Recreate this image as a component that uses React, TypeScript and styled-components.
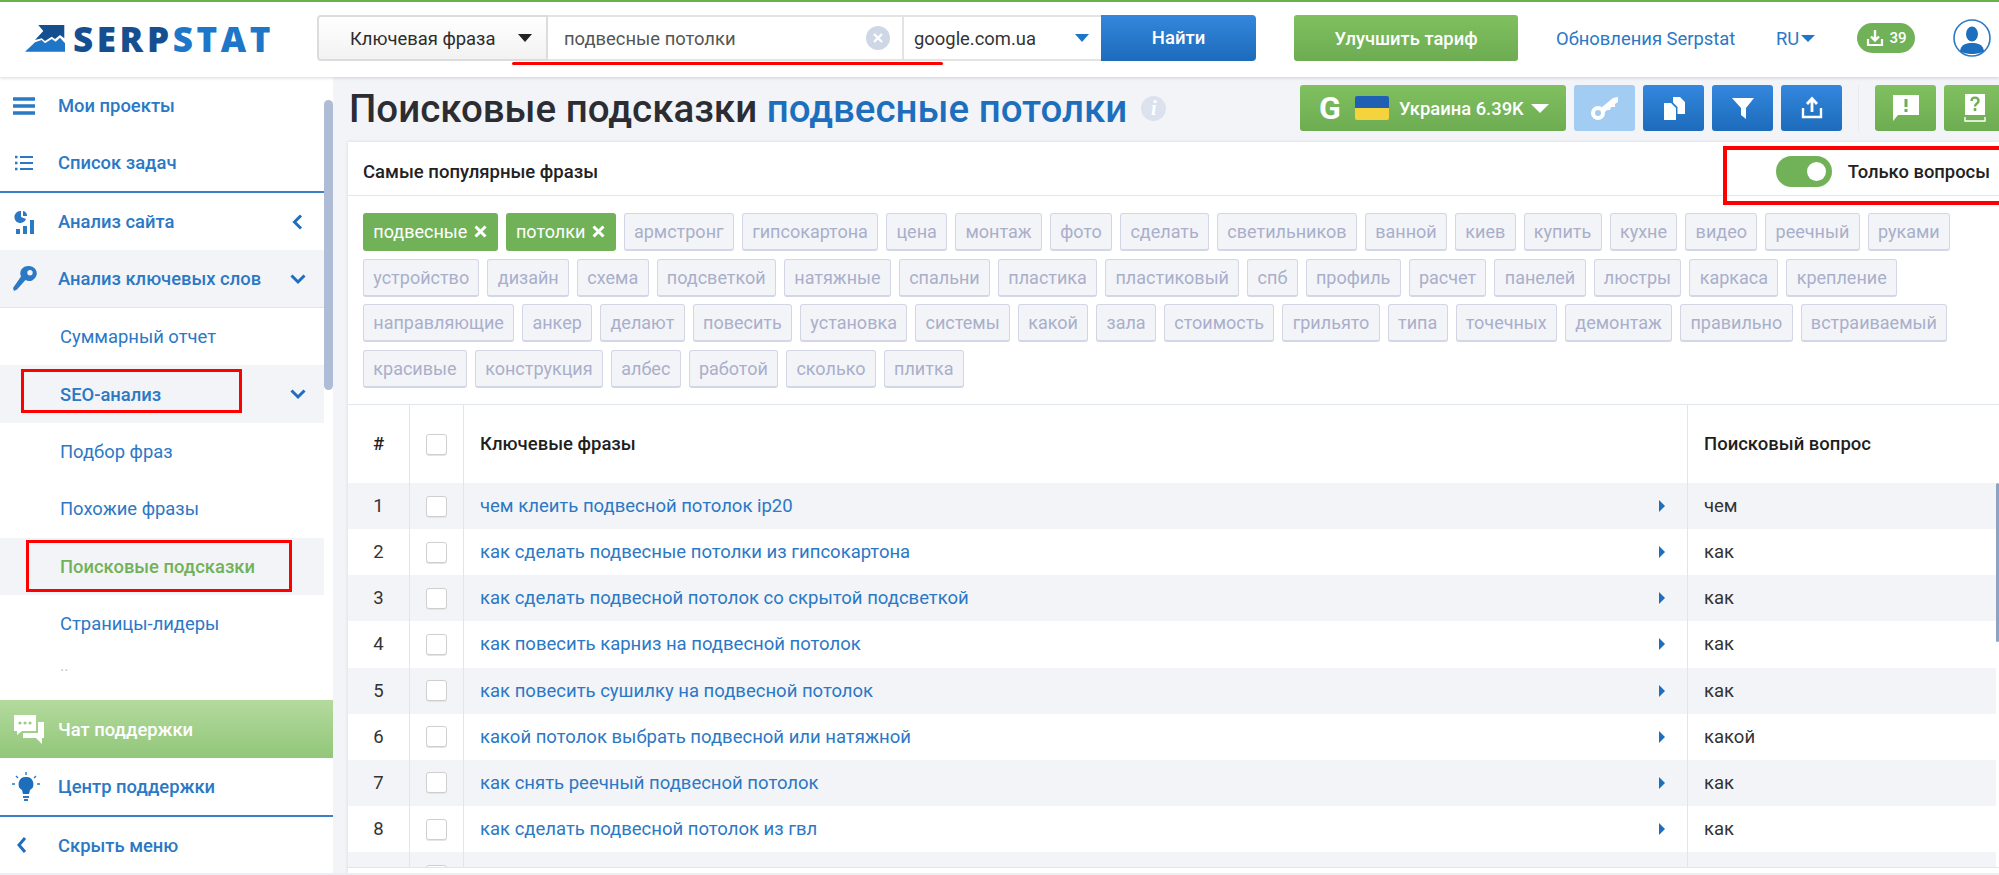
import React from 'react';
import styled, { createGlobalStyle } from 'styled-components';

const BLUE = '#2b78c5';
const GREEN = '#71b259';
const PALE = '#f3f4f8';
const LINE = '#e1e5f0';

const GlobalStyle = createGlobalStyle`
  html, body { margin: 0; padding: 0; background: #fff; }
  body { font-family: Roboto, "Liberation Sans", sans-serif; }
  * { box-sizing: border-box; }
`;

const Page = styled.div`
  position: relative;
  width: 1999px;
  height: 875px;
  overflow: hidden;
  display: flex;
  flex-direction: column;
  border-top: 2px solid #6ab04c;
  border-bottom: 2px solid #eceef3;
  background: #fff;
`;

// верхняя панель
const Header = styled.header`
  height: 75px;
  flex: none;
  display: flex;
  align-items: flex-start;
  padding: 13px 0 0 24px;
  box-shadow: 0 1px 3px rgba(120, 130, 150, .3);
  position: relative;
  z-index: 2;
  background: #fff;
`;

const Logo = styled.div`
  width: 293px;
  height: 46px;
  display: flex;
  align-items: center;
  gap: 7px;
`;

const LogoWord = styled.span`
  font-family: "Open Sans", Roboto, sans-serif;
  font-weight: 800;
  font-size: 35px;
  line-height: 1;
  letter-spacing: 3.6px;
  color: #164f8f;
  & > b { font-weight: 800; color: #1d76c8; }
`;

const SearchBar = styled.div`
  display: flex;
  height: 46px;
  width: 939px;
`;

const KindSelect = styled.div`
  width: 231px;
  display: flex;
  align-items: center;
  justify-content: space-between;
  padding: 0 14px 0 31px;
  font-size: 18.4px;
  color: #2c2c2c;
  background: linear-gradient(#ffffff, #f2f2f2);
  border: 2px solid #dcdcdc;
  border-radius: 4px 0 0 4px;
`;

const QueryBox = styled.div`
  width: 354px;
  display: flex;
  align-items: center;
  justify-content: space-between;
  padding: 0 12px 0 16px;
  font-size: 18.4px;
  color: #555;
  border-top: 2px solid #e3e3e3;
  border-bottom: 2px solid #e3e3e3;
`;

const ClearIcon = styled.span`
  width: 24px;
  height: 24px;
  border-radius: 50%;
  background: #cdd7e6;
  display: flex;
  align-items: center;
  justify-content: center;
`;

const DomainSelect = styled.div`
  width: 199px;
  display: flex;
  align-items: center;
  justify-content: space-between;
  padding: 0 12px 0 10px;
  font-size: 18.4px;
  color: #333;
  border: 2px solid #e3e3e3;
  border-right: 0;
`;

const Caret = styled.span<{ $color: string; $w?: number; $h?: number }>`
  width: 0;
  height: 0;
  flex: none;
  border-left: ${p => p.$w ?? 7}px solid transparent;
  border-right: ${p => p.$w ?? 7}px solid transparent;
  border-top: ${p => p.$h ?? 8}px solid ${p => p.$color};
`;

const FindButton = styled.div`
  width: 155px;
  display: flex;
  align-items: center;
  justify-content: center;
  color: #fff;
  font-size: 18.5px;
  font-weight: 500;
  background: linear-gradient(#3387dd, #1d6bbb);
  border-radius: 0 4px 4px 0;
`;

const UpgradeButton = styled.div`
  margin-left: 38px;
  width: 224px;
  height: 46px;
  display: flex;
  align-items: center;
  justify-content: center;
  color: #fff;
  font-size: 18.4px;
  font-weight: 500;
  background: linear-gradient(#80c05f, #6dac52);
  border-radius: 3px;
`;

const HeaderLinks = styled.div`
  height: 46px;
  display: flex;
  align-items: center;
  color: ${BLUE};
  font-size: 18.4px;
`;

const UpdatesLink = styled.span`
  margin-left: 38px;
  width: 220px;
`;

const Lang = styled.span`
  display: flex;
  align-items: center;
  gap: 2px;
  width: 81px;
`;

const Badge = styled.span`
  width: 58px;
  height: 30px;
  border-radius: 15px;
  background: ${GREEN};
  color: #fff;
  font-size: 15px;
  font-weight: 500;
  display: flex;
  align-items: center;
  justify-content: center;
  gap: 4px;
`;

const Avatar = styled.span`
  margin-left: 38px;
  display: flex;
`;

const Body = styled.div`
  flex: 1;
  min-height: 0;
  display: flex;
`;

// боковое меню
const Sidebar = styled.aside`
  width: 333px;
  flex: none;
  display: flex;
  flex-direction: column;
  background: #fff;
`;

const SideScroll = styled.nav`
  position: relative;
  height: 623px;
  overflow: hidden;
  flex: none;
  padding-right: 9px;
`;

const SideThumb = styled.div`
  position: absolute;
  top: 23px;
  right: 0;
  width: 9px;
  height: 290px;
  border-radius: 5px;
  background: #afbcd5;
`;

const SideItem = styled.div<{ $sel?: boolean; $tall?: number }>`
  height: ${p => p.$tall ?? 57}px;
  display: flex;
  align-items: center;
  padding-right: 18px;
  font-size: 18.4px;
  font-weight: 500;
  color: ${BLUE};
  background: ${p => (p.$sel ? PALE : 'transparent')};
`;

const SideIcon = styled.span`
  width: 58px;
  flex: none;
  display: flex;
  justify-content: flex-start;
  padding-left: 12px;
`;

const SideLabel = styled.span`
  flex: 1;
`;

const SubItem = styled.div<{ $sel?: boolean; $active?: boolean; $strong?: boolean }>`
  height: 57.4px;
  display: flex;
  align-items: center;
  padding: 0 18px 0 60px;
  font-size: 18.4px;
  font-weight: ${p => (p.$strong || p.$active ? 500 : 400)};
  color: ${p => (p.$active ? GREEN : BLUE)};
  background: ${p => (p.$sel ? PALE : 'transparent')};
`;

const MoreDots = styled.div`
  height: 49px;
  padding: 4px 0 0 60px;
  font-size: 16px;
  color: #b9c6dc;
`;

const Divider = styled.div`
  height: 2px;
  background: #3d7fc4;
`;

const ThinDivider = styled.div`
  height: 1px;
  background: ${LINE};
`;

const ChatItem = styled.div`
  height: 58px;
  display: flex;
  align-items: center;
  font-size: 18.4px;
  font-weight: 500;
  color: #fff;
  background: linear-gradient(#b4da9d, #92c67a);
`;

// контент
const Main = styled.main`
  flex: 1;
  min-width: 0;
  display: flex;
  flex-direction: column;
  padding: 8px 0 0 15px;
  background: ${PALE};
  overflow: hidden;
`;

const TitleRow = styled.div`
  height: 46px;
  flex: none;
  display: flex;
  align-items: center;
  margin-bottom: 11px;
`;

const Title = styled.h1`
  margin: 0;
  padding-left: 1px;
  font-size: 38.5px;
  font-weight: 500;
  color: #2b2d33;
  white-space: nowrap;
  & > em { font-style: normal; color: #1d6fbd; }
`;

const InfoDot = styled.span`
  margin-left: 14px;
  width: 25px;
  height: 25px;
  border-radius: 50%;
  background: #dbe2ed;
  color: #fff;
  font-family: "Liberation Serif", serif;
  font-style: italic;
  font-weight: 700;
  font-size: 20px;
  display: flex;
  align-items: center;
  justify-content: center;
`;

const Tools = styled.div`
  margin-left: auto;
  margin-right: -6px;
  display: flex;
  gap: 8px;
  align-items: center;
`;

const ToolButton = styled.div<{ $tone: 'blue' | 'green' | 'light' }>`
  width: 61px;
  height: 46px;
  flex: none;
  display: flex;
  align-items: center;
  justify-content: center;
  border-radius: 3px;
  background: ${p =>
    p.$tone === 'blue'
      ? 'linear-gradient(#3387dd, #1d6bbb)'
      : p.$tone === 'green'
      ? 'linear-gradient(#80c05f, #6dac52)'
      : '#a3ccf3'};
`;

const RegionButton = styled.div`
  width: 266px;
  height: 46px;
  flex: none;
  display: flex;
  align-items: center;
  padding-left: 19px;
  color: #fff;
  font-size: 18.4px;
  font-weight: 500;
  background: linear-gradient(#80c05f, #6dac52);
  border-radius: 3px;
`;

const GoogleG = styled.span`
  font-size: 32px;
  font-weight: 700;
  line-height: 1;
  width: 36px;
`;

const Flag = styled.span`
  width: 34px;
  height: 24px;
  margin-right: 10px;
  border-radius: 2px;
  background: linear-gradient(#1f5fb4 50%, #f5d33c 50%);
`;

const RegionText = styled.span`
  margin-right: 7px;
`;

const ToolSep = styled.span`
  width: 1px;
  height: 46px;
  margin: 0 8px;
  background: #e8eaf0;
`;

const Card = styled.section`
  flex: 1;
  min-height: 0;
  display: flex;
  flex-direction: column;
  background: #fff;
  box-shadow: 0 0 3px rgba(120, 130, 160, .25);
`;

const CardHead = styled.div`
  height: 54px;
  flex: none;
  display: flex;
  align-items: center;
  justify-content: space-between;
  padding: 6px 9px 0 15px;
  border-bottom: 1px solid ${LINE};
`;

const CardTitle = styled.span`
  font-size: 18.5px;
  font-weight: 500;
  color: #222;
`;

const OnlyQuestions = styled.div`
  display: flex;
  align-items: center;
  gap: 16px;
  font-size: 18.4px;
  font-weight: 500;
  color: #222;
`;

const Toggle = styled.span`
  width: 56px;
  height: 31px;
  border-radius: 16px;
  background: ${GREEN};
  display: flex;
  align-items: center;
  justify-content: flex-end;
  padding-right: 6px;
  &::after {
    content: '';
    width: 19px;
    height: 19px;
    border-radius: 50%;
    background: #fff;
  }
`;

const Tags = styled.div`
  flex: none;
  height: 209px;
  display: flex;
  flex-wrap: wrap;
  align-content: flex-start;
  gap: 7.6px 8px;
  padding: 17px 40px 0 15px;
  border-bottom: 1px solid ${LINE};
`;

const Tag = styled.span<{ $on?: boolean }>`
  height: 38px;
  display: flex;
  align-items: center;
  gap: 7px;
  padding: 0 9.3px;
  font-size: 18px;
  border-radius: 3px;
  color: ${p => (p.$on ? '#fff' : '#a9afca')};
  background: ${p => (p.$on ? GREEN : PALE)};
  border: 1px solid ${p => (p.$on ? GREEN : '#d3d6e5')};
  border-bottom-width: 2px;
`;

const Table = styled.div`
  flex: 1;
  min-height: 0;
  position: relative;
  overflow: hidden;
  padding-right: 3px;
  border-bottom: 1px solid ${LINE};
  margin-bottom: 5px;
`;

const TableThumb = styled.div`
  position: absolute;
  top: 78px;
  right: 0;
  width: 3px;
  height: 159px;
  background: #8ea2c4;
  border-radius: 2px;
`;

const Row = styled.div<{ $head?: boolean; $even?: boolean }>`
  height: ${p => (p.$head ? 78 : 46.15)}px;
  display: grid;
  grid-template-columns: 62px 54px 1fr 308px;
  background: ${p => (p.$even ? PALE : '#fff')};
  font-size: 18.5px;
  font-weight: ${p => (p.$head ? 500 : 400)};
  color: ${p => (p.$head ? '#1f1f1f' : '#333')};
`;

const NumCell = styled.div`
  display: flex;
  align-items: center;
  justify-content: center;
  border-right: 1px solid ${LINE};
`;

const CheckCell = styled.div`
  display: flex;
  align-items: center;
  justify-content: center;
  border-right: 1px solid ${LINE};
`;

const Checkbox = styled.span`
  width: 21px;
  height: 21px;
  border: 1px solid #cfcfcf;
  border-radius: 3px;
  background: #fff;
  box-shadow: 0 1px 0 #e4e4e4;
`;

const PhraseCell = styled.div`
  display: flex;
  align-items: center;
  justify-content: space-between;
  padding: 0 22px 0 16px;
  border-right: 1px solid ${LINE};
`;

const PhraseLink = styled.span`
  color: ${BLUE};
`;

const RowArrow = styled.span`
  width: 0;
  height: 0;
  border-top: 6px solid transparent;
  border-bottom: 6px solid transparent;
  border-left: 6px solid #1d6fbd;
`;

const QuestionCell = styled.div`
  display: flex;
  align-items: center;
  padding-left: 16px;
`;

// красные пометки поверх скриншота
const RedBox = styled.div<{ $x: number; $y: number; $w: number; $h: number; $bold?: boolean }>`
  position: absolute;
  left: ${p => p.$x}px;
  top: ${p => p.$y}px;
  width: ${p => p.$w}px;
  height: ${p => p.$h}px;
  border: ${p => (p.$bold ? 4 : 3)}px solid #f00;
  z-index: 5;
`;

const RedLine = styled.div`
  position: absolute;
  left: 512px;
  top: 60px;
  width: 431px;
  height: 3px;
  border-radius: 2px;
  background: #f00;
  z-index: 5;
`;

const TAGS: string[][] = [
  ['армстронг', 'гипсокартона', 'цена', 'монтаж', 'фото', 'сделать', 'светильников', 'ванной', 'киев', 'купить', 'кухне', 'видео', 'реечный', 'руками'],
  ['устройство', 'дизайн', 'схема', 'подсветкой', 'натяжные', 'спальни', 'пластика', 'пластиковый', 'спб', 'профиль', 'расчет', 'панелей', 'люстры', 'каркаса', 'крепление'],
  ['направляющие', 'анкер', 'делают', 'повесить', 'установка', 'системы', 'какой', 'зала', 'стоимость', 'грильято', 'типа', 'точечных', 'демонтаж', 'правильно', 'встраиваемый'],
  ['красивые', 'конструкция', 'албес', 'работой', 'сколько', 'плитка'],
];

const ROWS: [string, string][] = [
  ['чем клеить подвесной потолок ip20', 'чем'],
  ['как сделать подвесные потолки из гипсокартона', 'как'],
  ['как сделать подвесной потолок со скрытой подсветкой', 'как'],
  ['как повесить карниз на подвесной потолок', 'как'],
  ['как повесить сушилку на подвесной потолок', 'как'],
  ['какой потолок выбрать подвесной или натяжной', 'какой'],
  ['как снять реечный подвесной потолок', 'как'],
  ['как сделать подвесной потолок из гвл', 'как'],
];

const LogoMark = () => (
  <svg width="42" height="30" viewBox="0 0 42 30">
    <path d="M14.3 2H40.3V15.3L36 12L31 16L27.7 13.7L21 18L17.7 15.3L11 17L19.3 8Z" fill="#164f8f" />
    <path d="M1 28.7L11 19.3L17.7 17L21 20.3L27.7 16L31.7 18.7L36 14.7L41 20.3V28.7Z" fill="#1d76c8" />
  </svg>
);

const Chevron = ({ dir }: { dir: 'left' | 'down' }) => (
  <svg width="16" height="16" viewBox="0 0 16 16">
    <path
      d={dir === 'left' ? 'M11 1.5L4.5 8L11 14.5' : 'M1.5 4.5L8 11L14.5 4.5'}
      fill="none"
      stroke="#1d6fbd"
      strokeWidth="3"
    />
  </svg>
);

const App = () => (
  <Page>
    <GlobalStyle />
    <Header>
      <Logo>
        <LogoMark />
        <LogoWord>SERP<b>STAT</b></LogoWord>
      </Logo>
      <SearchBar>
        <KindSelect>Ключевая фраза <Caret $color="#222" /></KindSelect>
        <QueryBox>
          подвесные потолки
          <ClearIcon>
            <svg width="12" height="12" viewBox="0 0 12 12">
              <path d="M2 2L10 10M10 2L2 10" stroke="#fff" strokeWidth="2.4" />
            </svg>
          </ClearIcon>
        </QueryBox>
        <DomainSelect>google.com.ua <Caret $color="#1d76c8" /></DomainSelect>
        <FindButton>Найти</FindButton>
      </SearchBar>
      <UpgradeButton>Улучшить тариф</UpgradeButton>
      <HeaderLinks>
        <UpdatesLink>Обновления Serpstat</UpdatesLink>
        <Lang>RU <Caret $color="#1d76c8" $h={7} /></Lang>
        <Badge>
          <svg width="20" height="20" viewBox="0 0 20 20">
            <path d="M10 2V12M6 8.5L10 12.5L14 8.5" fill="none" stroke="#fff" strokeWidth="2.4" />
            <path d="M3 11V17H17V11" fill="none" stroke="#fff" strokeWidth="2.2" />
          </svg>
          39
        </Badge>
        <Avatar>
          <svg width="38" height="38" viewBox="0 0 38 38">
            <circle cx="19" cy="19" r="18" fill="#fff" stroke="#2b78c5" strokeWidth="1.6" />
            <ellipse cx="19" cy="15" rx="6" ry="7.5" fill="#1d6fbd" />
            <path d="M7 32C8 26 12 24 19 24C26 24 30 26 31 32C27 36 11 36 7 32Z" fill="#1d6fbd" />
          </svg>
        </Avatar>
      </HeaderLinks>
    </Header>
    <Body>
      <Sidebar>
        <SideScroll>
          <SideThumb />
          <SideItem>
            <SideIcon>
              <svg width="24" height="20" viewBox="0 0 24 20">
                <path d="M1 3H23M1 10H23M1 17H23" stroke="#2b78c5" strokeWidth="3.4" />
              </svg>
            </SideIcon>
            <SideLabel>Мои проекты</SideLabel>
          </SideItem>
          <SideItem>
            <SideIcon>
              <svg width="24" height="18" viewBox="0 0 24 18">
                <path d="M8 3H21M8 9H21M8 15H21" stroke="#2b78c5" strokeWidth="2" />
                <path d="M3 3H5.5M3 9H5.5M3 15H5.5" stroke="#2b78c5" strokeWidth="2.4" />
              </svg>
            </SideIcon>
            <SideLabel>Список задач</SideLabel>
          </SideItem>
          <Divider />
          <SideItem>
            <SideIcon>
              <svg width="24" height="24" viewBox="0 0 24 24">
                <path d="M9 1A6 6 0 1 0 14 9L9 7Z" fill="#2b78c5" />
                <path d="M11 1A5 5 0 0 1 15 6L11 6Z" fill="#2b78c5" />
                <path d="M4 19H8V24H4ZM11 16H15V24H11ZM18 10H22V24H18Z" fill="#2b78c5" />
              </svg>
            </SideIcon>
            <SideLabel>Анализ сайта</SideLabel>
            <Chevron dir="left" />
          </SideItem>
          <SideItem $sel>
            <SideIcon>
              <svg width="26" height="27" viewBox="0 0 26 27">
                <path fillRule="evenodd" d="M17 1A7.5 7.5 0 1 1 13.5 15L5 24.5L2 26L1 23L9 11.5A7.5 7.5 0 0 1 17 1ZM18 5A2.7 2.7 0 1 0 18 10.4A2.7 2.7 0 1 0 18 5Z" fill="#2b78c5" />
              </svg>
            </SideIcon>
            <SideLabel>Анализ ключевых слов</SideLabel>
            <Chevron dir="down" />
          </SideItem>
          <ThinDivider />
          <SubItem>Суммарный отчет</SubItem>
          <SubItem $sel $strong>
            <SideLabel>SEO-анализ</SideLabel>
            <Chevron dir="down" />
          </SubItem>
          <SubItem>Подбор фраз</SubItem>
          <SubItem>Похожие фразы</SubItem>
          <SubItem $sel $active>Поисковые подсказки</SubItem>
          <SubItem>Страницы-лидеры</SubItem>
          <MoreDots>..</MoreDots>
        </SideScroll>
        <ChatItem>
          <SideIcon>
            <svg width="34" height="32" viewBox="0 0 34 32">
              <path d="M2 2H24V18H10L5 22V18H2Z" fill="#fff" />
              <path d="M26 9H32V25H30V31L24 25H11V20H26Z" fill="#fff" />
              <circle cx="8" cy="10" r="1.6" fill="#9ccb84" />
              <circle cx="13" cy="10" r="1.6" fill="#9ccb84" />
              <circle cx="18" cy="10" r="1.6" fill="#9ccb84" />
            </svg>
          </SideIcon>
          Чат поддержки
        </ChatItem>
        <SideItem>
          <SideIcon>
            <svg width="28" height="30" viewBox="0 0 28 30">
              <path d="M14 5A7 7 0 0 1 18 18L17 22H11L10 18A7 7 0 0 1 14 5Z" fill="#1d6fbd" />
              <path d="M11 24H17V26H11ZM12 27H16V29H12Z" fill="#2b78c5" />
              <path d="M14 0V3M4 4L6 6M24 4L22 6M0 12H3M25 12H28" stroke="#2b78c5" strokeWidth="1.4" />
            </svg>
          </SideIcon>
          Центр поддержки
        </SideItem>
        <Divider />
        <SideItem $tall={56}>
          <SideIcon>
            <svg width="22" height="18" viewBox="0 0 22 18">
              <path d="M13 2L7 9L13 16" fill="none" stroke="#1d6fbd" strokeWidth="3" />
            </svg>
          </SideIcon>
          Скрыть меню
        </SideItem>
      </Sidebar>
      <Main>
        <TitleRow>
          <Title>Поисковые подсказки <em>подвесные потолки</em></Title>
          <InfoDot>i</InfoDot>
          <Tools>
            <RegionButton>
              <GoogleG>G</GoogleG>
              <Flag />
              <RegionText>Украина 6.39K</RegionText>
              <Caret $color="#fff" $w={9} $h={9} />
            </RegionButton>
            <ToolButton $tone="light">
              <svg width="28" height="26" viewBox="0 0 28 26">
                <path fillRule="evenodd" d="M7 11A7 7 0 1 1 7 25A7 7 0 1 1 7 11ZM7 15A3 3 0 1 0 7 21A3 3 0 1 0 7 15Z" fill="#fff" />
                <path d="M10.5 12.5L22 3L27 2L27 7L24 9L24 12L20 12L19 15L16 15L13.5 17.5Z" fill="#fff" />
              </svg>
            </ToolButton>
            <ToolButton $tone="blue">
              <svg width="24" height="24" viewBox="0 0 24 24">
                <path d="M2 7H9L14 12V24H2Z" fill="#fff" />
                <path d="M11 1H18L23 6V18H15.5V11L11 6.5Z" fill="#fff" />
              </svg>
            </ToolButton>
            <ToolButton $tone="blue">
              <svg width="24" height="24" viewBox="0 0 24 24">
                <path d="M1 2H23L15 12V23L10 19V12Z" fill="#fff" />
              </svg>
            </ToolButton>
            <ToolButton $tone="blue">
              <svg width="22" height="24" viewBox="0 0 22 24">
                <path d="M11 16V3M6 8L11 2.5L16 8" fill="none" stroke="#fff" strokeWidth="2.8" />
                <path d="M2 12V21H20V12" fill="none" stroke="#fff" strokeWidth="2.4" />
              </svg>
            </ToolButton>
            <ToolSep />
            <ToolButton $tone="green">
              <svg width="30" height="28" viewBox="0 0 30 28">
                <path d="M2 1H28V21H7L2 27Z" fill="#fff" />
                <path d="M15 5V13M15 15V18" stroke="#6fae52" strokeWidth="3" />
              </svg>
            </ToolButton>
            <ToolButton $tone="green">
              <svg width="24" height="30" viewBox="0 0 24 30">
                <path d="M2 1H22V22H2Z" fill="#fff" />
                <path d="M2 24V28H22V24" fill="none" stroke="#fff" strokeWidth="1.4" />
                <path d="M8.5 8C8.5 3.5 15.5 3.5 15.5 8C15.5 10.5 12 10.5 12 13.5" fill="none" stroke="#6fae52" strokeWidth="2.4" />
                <path d="M12 15V18" stroke="#6fae52" strokeWidth="2.6" />
              </svg>
            </ToolButton>
          </Tools>
        </TitleRow>
        <Card>
          <CardHead>
            <CardTitle>Самые популярные фразы</CardTitle>
            <OnlyQuestions>
              <Toggle />
              Только вопросы
            </OnlyQuestions>
          </CardHead>
          <Tags>
            {['подвесные', 'потолки'].map(t => (
              <Tag key={t} $on>
                {t}
                <svg width="13" height="13" viewBox="0 0 13 13">
                  <path d="M1.5 1.5L11.5 11.5M11.5 1.5L1.5 11.5" stroke="#fff" strokeWidth="3" />
                </svg>
              </Tag>
            ))}
            {TAGS.flat().map(t => <Tag key={t}>{t}</Tag>)}
          </Tags>
          <Table>
            <TableThumb />
            <Row $head>
              <NumCell>#</NumCell>
              <CheckCell><Checkbox /></CheckCell>
              <PhraseCell>Ключевые фразы</PhraseCell>
              <QuestionCell>Поисковый вопрос</QuestionCell>
            </Row>
            {ROWS.map(([phrase, word], i) => (
              <Row key={phrase} $even={i % 2 === 0}>
                <NumCell>{i + 1}</NumCell>
                <CheckCell><Checkbox /></CheckCell>
                <PhraseCell>
                  <PhraseLink>{phrase}</PhraseLink>
                  <RowArrow />
                </PhraseCell>
                <QuestionCell>{word}</QuestionCell>
              </Row>
            ))}
            <Row $even>
              <NumCell />
              <CheckCell><Checkbox /></CheckCell>
              <PhraseCell />
              <QuestionCell />
            </Row>
          </Table>
        </Card>
      </Main>
    </Body>
    <RedLine />
    <RedBox $bold $x={1723} $y={144} $w={290} $h={59} />
    <RedBox $x={21} $y={367} $w={221} $h={44} />
    <RedBox $x={26} $y={538} $w={266} $h={52} />
  </Page>
);

export default App;
